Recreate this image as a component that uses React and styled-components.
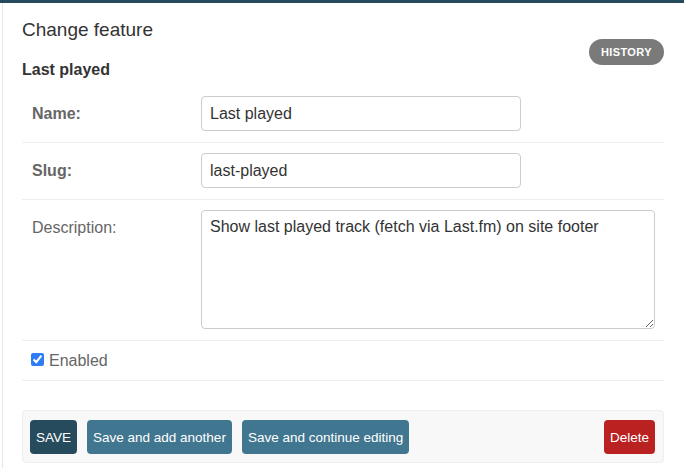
import React from 'react';
import styled, { createGlobalStyle } from 'styled-components';

const GlobalStyle = createGlobalStyle`
  body {
    margin: 0;
    background: #fff;
    font-family: "Liberation Sans", Arial, sans-serif;
    color: #333;
  }
`;

const Page = styled.div`
  display: flex;
  min-height: 100vh;
  border-top: 3px solid #264b5d;
  box-sizing: border-box;
`;

const Sidebar = styled.div`
  width: 2px;
  border-right: 1px solid #e6e6e6;
`;

const Main = styled.main`
  flex: 1;
  padding: 16px 20px 0 19px;
`;

const TitleRow = styled.div`
  display: flex;
  justify-content: space-between;
  align-items: flex-start;
`;

const Title = styled.h1`
  margin: 0;
  font-size: 19px;
  line-height: 22px;
  font-weight: 400;
  color: #333;
`;

const Subtitle = styled.h2`
  margin: 19px 0 0;
  font-size: 16px;
  line-height: 20px;
  font-weight: 700;
  color: #333;
`;

const HistoryLink = styled.a`
  margin-top: 20px;
  height: 26px;
  padding: 0 12px;
  border-radius: 15px;
  background: #7a7a7a;
  color: #fff;
  font-size: 11px;
  font-weight: 700;
  letter-spacing: 0.4px;
  text-transform: uppercase;
  display: flex;
  align-items: center;
  text-decoration: none;
`;

const Fieldset = styled.fieldset`
  margin: 6px 0 0;
  padding: 0;
  border: none;
`;

const FormRow = styled.div`
  display: flex;
  align-items: ${p => (p.$inline ? 'center' : 'flex-start')};
  padding: ${p => (p.$inline ? '10px 9px' : '10px 10px 11px')};
  border-bottom: 1px solid #eee;
`;

const Label = styled.label`
  width: 169px;
  flex-shrink: 0;
  padding-top: 8px;
  font-size: 16px;
  line-height: 20px;
  color: #666;
  font-weight: ${p => (p.$required ? 700 : 400)};
`;

const TextInput = styled.input`
  box-sizing: border-box;
  width: 320px;
  height: 35px;
  padding: 0 8px;
  border: 1px solid #ccc;
  border-radius: 4px;
  font-family: inherit;
  font-size: 16px;
  line-height: 20px;
  color: #333;
  outline: none;
`;

const TextArea = styled.textarea`
  box-sizing: border-box;
  flex: 1;
  height: 119px;
  margin-right: -1px;
  padding: 6px 8px;
  border: 1px solid #ccc;
  border-radius: 4px;
  font-family: inherit;
  font-size: 16px;
  line-height: 20px;
  color: #333;
  outline: none;
`;

const Checkbox = styled.input`
  width: 13px;
  height: 13px;
  margin: 0 5px 2px 0;
  accent-color: #2f7df6;
`;

const CheckLabel = styled.label`
  font-size: 16px;
  line-height: 19px;
  color: #666;
`;

const SubmitRow = styled.div`
  display: flex;
  align-items: center;
  gap: 10px;
  margin-top: 29px;
  padding: 9px 8px 8px 7px;
  background: #f8f8f8;
  border: 1px solid #eee;
  border-radius: 4px;
`;

const Button = styled.button`
  height: 34px;
  padding: 0 6px;
  border: none;
  border-radius: 4px;
  background: ${p => p.$bg};
  color: #fff;
  font-family: inherit;
  font-size: 13.5px;
  cursor: pointer;
  margin-left: ${p => (p.$push ? 'auto' : '0')};
`;

const App = () => {
  return (
    <>
      <GlobalStyle />
      <Page>
        <Sidebar />
        <Main>
          <TitleRow>
            <div>
              <Title>Change feature</Title>
              <Subtitle>Last played</Subtitle>
            </div>
            <HistoryLink href="#">History</HistoryLink>
          </TitleRow>
          <Fieldset>
            <FormRow>
              <Label $required>Name:</Label>
              <TextInput type="text" defaultValue="Last played" />
            </FormRow>
            <FormRow>
              <Label $required>Slug:</Label>
              <TextInput type="text" defaultValue="last-played" />
            </FormRow>
            <FormRow>
              <Label>Description:</Label>
              <TextArea defaultValue="Show last played track (fetch via Last.fm) on site footer" />
            </FormRow>
            <FormRow $inline>
              <Checkbox type="checkbox" id="enabled" defaultChecked />
              <CheckLabel htmlFor="enabled">Enabled</CheckLabel>
            </FormRow>
          </Fieldset>
          <SubmitRow>
            <Button $bg="#264b5d">SAVE</Button>
            <Button $bg="#417690">Save and add another</Button>
            <Button $bg="#417690">Save and continue editing</Button>
            <Button $bg="#ba2121" $push>Delete</Button>
          </SubmitRow>
        </Main>
      </Page>
    </>
  );
};

export default App;
